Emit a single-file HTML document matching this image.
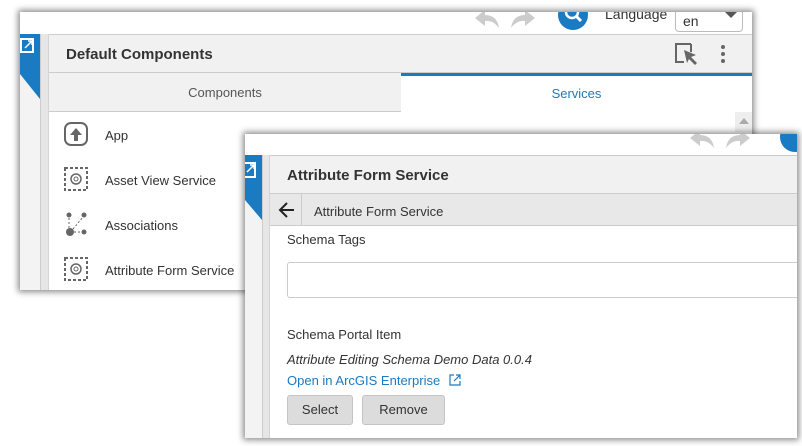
<!DOCTYPE html>
<html><head><style>
*{margin:0;padding:0;box-sizing:border-box}
body{width:802px;height:446px;background:#fff;position:relative;overflow:hidden;font-family:"Liberation Sans",sans-serif;color:#323232}
.win{position:absolute;background:#fff;box-shadow:0 0 6px 2px rgba(0,0,0,.45);overflow:hidden}
.abs{position:absolute}
</style></head><body>
<!-- window 1 -->
<div class="win" style="left:20px;top:12px;width:732px;height:278px">
  <div class="abs" style="left:0;top:0;width:732px;height:22px;background:#fff"></div>
  <svg class="abs" style="left:445px;top:-6px" width="80" height="22"><path d="M10 12 L20 4 L20 9 Q32 9 34 22 Q28 14 20 15 L20 20Z" fill="#ccc"/><path d="M70 12 L60 4 L60 9 Q48 9 46 22 Q52 14 60 15 L60 20Z" fill="#ccc"/></svg>
  <div class="abs" style="left:538px;top:-12px;width:30px;height:30px;border-radius:50%;background:#1a7ac2"></div>
  <svg class="abs" style="left:543px;top:-8px" width="20" height="22"><circle cx="9" cy="8" r="6" stroke="#fff" stroke-width="2.5" fill="none"/><path d="M13 12 L18 17" stroke="#fff" stroke-width="3"/></svg>
  <div class="abs" style="left:585px;top:-6px;font-size:14px;color:#333">Language</div>
  <div class="abs" style="left:655px;top:-10px;width:68px;height:30px;border:1px solid #bbb;border-radius:4px;padding:10px 0 0 7px;font-size:14px">en</div>
  <svg class="abs" style="left:705px;top:0" width="12" height="8"><path d="M0 0 L12 0 L6 6Z" fill="#555"/></svg>
  <div class="abs" style="left:0;top:22px;width:20px;height:256px;background:#f3f3f3"></div>
  <svg class="abs" style="left:0;top:22px" width="20" height="65"><path d="M0 0H20V65L0 40Z" fill="#1a7ac2"/><rect x="1" y="5" width="12" height="13" fill="none" stroke="#fff" stroke-width="2"/><path d="M5 14 L12 7 M8 7H12V11" stroke="#fff" stroke-width="1.5" fill="none"/></svg>
  <div class="abs" style="left:20px;top:22px;width:9px;height:256px;background:#e6e6e6;border-left:1px solid #ccc;border-right:1px solid #d4d4d4"></div>
  <div class="abs" style="left:29px;top:22px;width:703px;height:39px;background:#f1f1f1;border-top:1px solid #ccc;border-bottom:1px solid #ccc;font-size:15px;font-weight:bold;padding:11px 0 0 17px;color:#333">Default Components</div>
  <svg class="abs" style="left:655px;top:31px" width="24" height="22"><path d="M16 1H1V19H9" stroke="#666" stroke-width="2" fill="none"/><path d="M16 1V9" stroke="#666" stroke-width="2"/><path d="M9 7 L21 12 L16 14 L22 20 L20 22 L14 16 L12 20Z" fill="#666"/></svg>
  <div class="abs" style="left:701px;top:33px;width:4px;height:4px;border-radius:2px;background:#666;box-shadow:0 7px 0 #666,0 14px 0 #666"></div>
  <div class="abs" style="left:29px;top:61px;width:352px;height:39px;background:#f1f1f1;border-bottom:1px solid #ccc;text-align:center;font-size:13px;line-height:39px;color:#555">Components</div>
  <div class="abs" style="left:381px;top:61px;width:351px;height:39px;background:#fff;border-top:3px solid #1a7ac2;text-align:center;font-size:13px;line-height:36px;color:#1a7ac2">Services</div>
  <div class="abs" style="left:715px;top:100px;width:17px;height:20px;background:#eee"></div>
  <svg class="abs" style="left:719px;top:106px" width="10" height="6"><path d="M0 6L5 0L10 6Z" fill="#aaa"/></svg>
  <svg class="abs" style="left:44px;top:110px" width="26" height="26"><rect x="1" y="1" width="22" height="22" rx="6" fill="none" stroke="#666" stroke-width="2"/><path d="M12 6 L6 13 H10 V19 H14 V13 H18Z" fill="#666"/></svg>
  <div class="abs" style="left:85px;top:116px;font-size:13px">App</div>
  <svg class="abs" style="left:44px;top:155px" width="26" height="26"><rect x="1" y="1" width="22" height="22" fill="none" stroke="#666" stroke-width="2" stroke-dasharray="3 2"/><circle cx="12" cy="12" r="5" fill="none" stroke="#666" stroke-width="1.5"/><circle cx="12" cy="12" r="2" fill="none" stroke="#666"/></svg>
  <div class="abs" style="left:85px;top:161px;font-size:13px">Asset View Service</div>
  <svg class="abs" style="left:44px;top:200px" width="26" height="26"><circle cx="5" cy="3" r="2.5" fill="#666"/><circle cx="20" cy="3" r="2.5" fill="#666"/><circle cx="6" cy="20" r="4" fill="#666"/><circle cx="20" cy="20" r="2.5" fill="#666"/><path d="M5 6V16 M9 17L19 5 M10 20H18" stroke="#666" stroke-dasharray="2 2"/></svg>
  <div class="abs" style="left:85px;top:206px;font-size:13px">Associations</div>
  <svg class="abs" style="left:44px;top:245px" width="26" height="26"><rect x="1" y="1" width="22" height="22" fill="none" stroke="#666" stroke-width="2" stroke-dasharray="3 2"/><circle cx="12" cy="12" r="5" fill="none" stroke="#666" stroke-width="1.5"/><circle cx="12" cy="12" r="2" fill="none" stroke="#666"/></svg>
  <div class="abs" style="left:85px;top:251px;font-size:13px">Attribute Form Service</div>
</div>
<!-- window 2 -->
<div class="win" style="left:245px;top:134px;width:552px;height:304px">
  <svg class="abs" style="left:435px;top:-8px" width="80" height="22"><path d="M10 12 L20 4 L20 9 Q32 9 34 22 Q28 14 20 15 L20 20Z" fill="#ccc"/><path d="M70 12 L60 4 L60 9 Q48 9 46 22 Q52 14 60 15 L60 20Z" fill="#ccc"/></svg>
  <div class="abs" style="left:535px;top:-12px;width:30px;height:30px;border-radius:50%;background:#1a7ac2"></div>
  <div class="abs" style="left:0;top:21px;width:17px;height:283px;background:#f3f3f3"></div>
  <svg class="abs" style="left:0;top:21px" width="17" height="65"><path d="M0 0H17V65L0 45Z" fill="#1a7ac2"/><rect x="-4" y="8" width="14" height="14" fill="none" stroke="#fff" stroke-width="2"/><path d="M2 17 L9 10 M5 10H9V14" stroke="#fff" stroke-width="1.5" fill="none"/></svg>
  <div class="abs" style="left:17px;top:21px;width:8px;height:283px;background:#e6e6e6;border-left:1px solid #ccc;border-right:1px solid #d4d4d4"></div>
  <div class="abs" style="left:25px;top:21px;width:527px;height:39px;background:#f1f1f1;border-top:1px solid #ccc;border-bottom:1px solid #ccc;font-size:15px;font-weight:bold;padding:11px 0 0 17px;color:#333">Attribute Form Service</div>
  <div class="abs" style="left:25px;top:60px;width:527px;height:32px;background:#e8e8e8;border-bottom:1px solid #ccc"></div>
  <div class="abs" style="left:25px;top:60px;width:32px;height:32px;border-right:1px solid #ccc"></div>
  <svg class="abs" style="left:33px;top:67px" width="18" height="18"><path d="M16 9H2 M9 2L2 9L9 16" stroke="#222" stroke-width="2" fill="none"/></svg>
  <div class="abs" style="left:69px;top:70px;font-size:13px;color:#333">Attribute Form Service</div>
  <div class="abs" style="left:42px;top:98px;font-size:13px;color:#333">Schema Tags</div>
  <div class="abs" style="left:42px;top:128px;width:520px;height:36px;border:1px solid #ccc;border-radius:3px"></div>
  <div class="abs" style="left:42px;top:193px;font-size:13px;color:#333">Schema Portal Item</div>
  <div class="abs" style="left:42px;top:218px;font-size:13px;font-style:italic;color:#333">Attribute Editing Schema Demo Data 0.0.4</div>
  <div class="abs" style="left:42px;top:239px;font-size:13px;color:#1a7ac2">Open in ArcGIS Enterprise</div>
  <svg class="abs" style="left:204px;top:240px" width="12" height="12"><path d="M5 1H1V11H11V7 M7 1H11V5 M11 1L5 7" stroke="#1a7ac2" stroke-width="1.2" fill="none"/></svg>
  <div class="abs" style="left:42px;top:261px;width:66px;height:30px;background:#dcdcdc;border:1px solid #c4c4c4;border-radius:3px;text-align:center;line-height:28px;font-size:13px">Select</div>
  <div class="abs" style="left:117px;top:261px;width:83px;height:30px;background:#dcdcdc;border:1px solid #c4c4c4;border-radius:3px;text-align:center;line-height:28px;font-size:13px">Remove</div>
</div>
</body></html>
